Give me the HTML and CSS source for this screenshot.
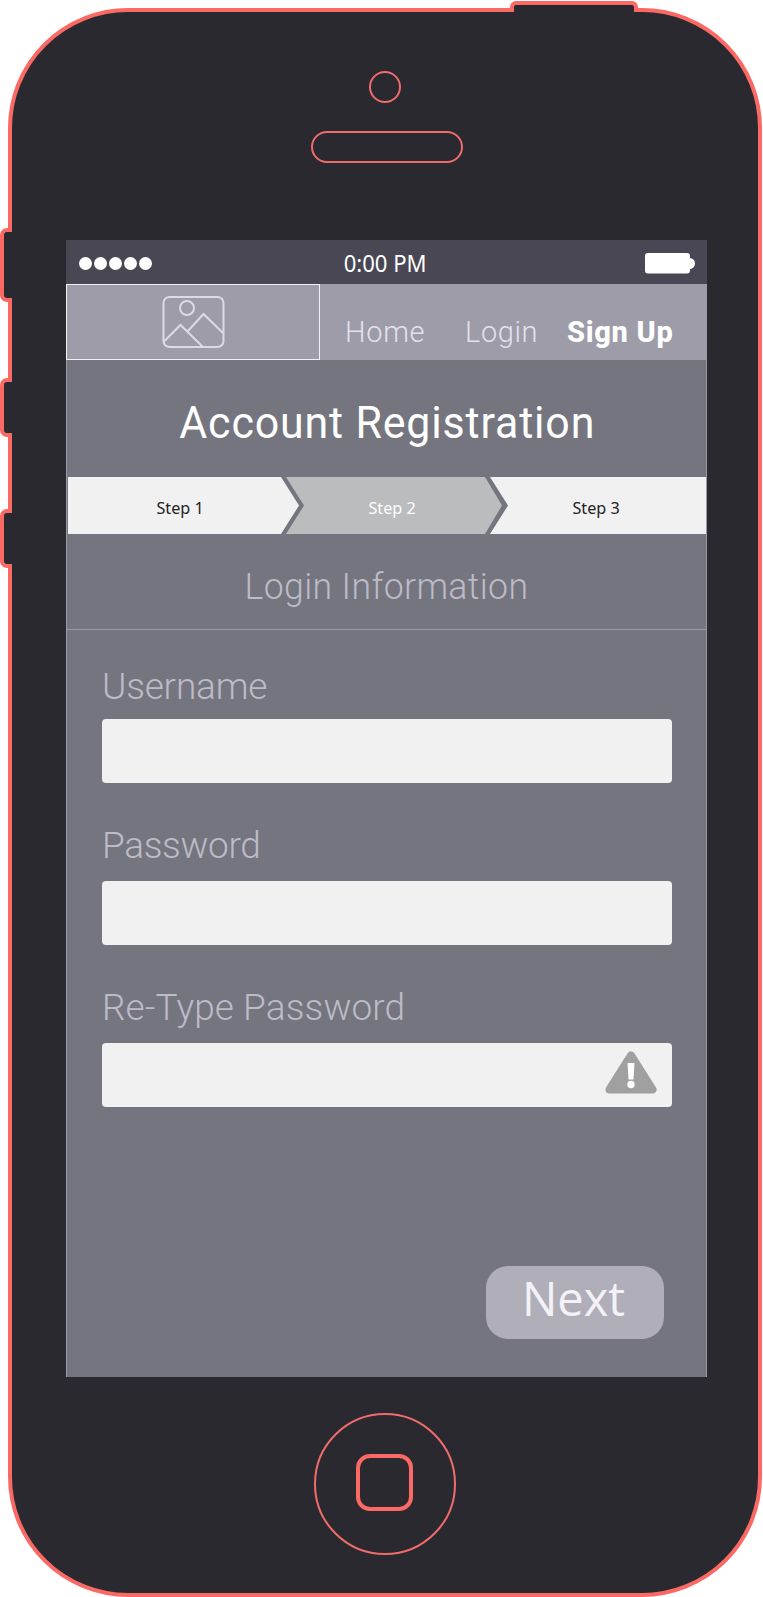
FILE: index.html
```html
<!DOCTYPE html>
<html lang="en">
<head>
<meta charset="utf-8">
<title>Account Registration</title>
<link rel="stylesheet" href="styles.css">
</head>
<body>
<div class="phone">
  <span class="key key-power"></span>
  <span class="key key-mute"></span>
  <span class="key key-up"></span>
  <span class="key key-down"></span>
  <div class="camera"></div>
  <div class="speaker"></div>
  <main class="screen">
    <div class="status">
      <div class="signal"><i></i><i></i><i></i><i></i><i></i></div>
      <span class="clock">0:00 PM</span>
      <svg class="battery" width="51" height="21" viewBox="0 0 51 21"><rect x="1" width="45" height="20.500" rx="3"/><circle cx="45.500" cy="10.500" r="5.500"/></svg>
    </div>
    <nav class="nav">
      <div class="logo">
        <svg width="64" height="54" viewBox="0 0 64 54"><rect x="2.500" y="2" width="60" height="50" rx="6"/><circle cx="26" cy="13" r="7"/><path d="M3 46.500L19.500 30L41.500 51.500M26.500 36.500L42.500 19L62 38"/></svg>
      </div>
      <div class="links">
        <a class="link home">Home</a>
        <a class="link login">Login</a>
        <a class="link signup">Sign Up</a>
      </div>
    </nav>
    <h1 class="title"><span>Account Registration</span></h1>
    <ol class="steps">
      <li class="step first"><span>Step 1</span></li>
      <li class="step current"><span>Step 2</span></li>
      <li class="step last"><span>Step 3</span></li>
    </ol>
    <h2 class="subtitle"><span>Login Information</span></h2>
    <form class="form">
      <div class="field"><label class="l-user">Username</label><div class="input"></div></div>
      <div class="field"><label class="l-pass">Password</label><div class="input"></div></div>
      <div class="field"><label class="l-retype">Re-Type Password</label><div class="input">
        <svg class="warn" width="52" height="43" viewBox="0 0 52 43"><path class="tri" d="M26 4.500L47.500 38.500H4.500Z"/><path class="mark" d="M22.500 12H29.500L28.500 28.500H23.500Z"/><circle class="mark" cx="26" cy="33.500" r="3.700"/></svg>
      </div></div>
      <div class="next"><span>Next</span></div>
    </form>
  </main>
  <div class="home-button"><div class="home-square"></div></div>
</div>
</body>
</html>
```
FILE: styles.css
```css
* { box-sizing: border-box; }
body { margin: 0; background: #fff; font-family: Roboto, sans-serif; padding: 8px 0 0 8px; }
.phone {
  position: relative; width: 754px; height: 1589px;
  border: 4px solid #fb6964; border-radius: 120px; background: #2a2930;
  display: flex; flex-direction: column; align-items: center;
}
.key { position: absolute; border: 4px solid #fb6964; background: #2a2930; }
.key-power { left: 498px; top: -11px; width: 128px; height: 11px; border-bottom: 0; border-radius: 6px 6px 0 0; }
.key-mute, .key-up, .key-down { left: -12px; width: 12px; border-right: 0; border-radius: 7px 0 0 7px; }
.key-mute { top: 216px; height: 74px; }
.key-up { top: 366px; height: 59px; }
.key-down { top: 497px; height: 59px; }
.camera { flex: none; margin-top: 59px; width: 32px; height: 32px; border: 2px solid #f06c6a; border-radius: 50%; }
.speaker { flex: none; margin: 28px 0 0 4px; width: 152px; height: 32px; border: 2px solid #f06c6a; border-radius: 16px; }
.screen {
  flex: none; margin: 77px 0 0 3px; width: 641px; height: 1137px; background: #75757f;
  display: flex; flex-direction: column; box-shadow: inset 1px 0 #9a99a5, inset -1px 0 #9a99a5;
}
.status {
  height: 44px; flex: none; background: #484753; display: grid;
  grid-template-columns: 1fr auto 1fr; align-items: center; padding: 3px 12px 0 13px;
}
.signal { display: flex; gap: 2.100px; }
.signal i { width: 13px; height: 13px; border-radius: 50%; background: #fff; }
.clock { font: 23.500px/40px "Noto Sans", sans-serif; color: #fff; transform: scaleX(.94); margin: -2px 4px 0 0; }
.battery { justify-self: end; fill: #fff; }
.nav { height: 76px; flex: none; background: #9d9ca8; display: flex; }
.logo { width: 254px; border: 1px solid #f0f0f5; padding: 10px 0 0 94px; flex: none; }
.logo svg { display: block; fill: none; stroke: #dcdbe5; stroke-width: 2; }
.links { display: flex; padding-top: 31px; font-size: 29px; line-height: 34px; font-weight: 300; color: #e3e2ec; }
.link { white-space: nowrap; letter-spacing: .6px; }
.home { margin-left: 25px; width: 120px; letter-spacing: .7px; }
.login { width: 102px; }
.signup { font-weight: 800; color: #fff; letter-spacing: .7px; }
.title { flex: none; margin: 0; height: 117px; padding: 8px 0 0 2px; font-size: 45px; font-weight: 400; line-height: 109px; letter-spacing: .9px; color: #fff; text-align: center; }
.title span { display: inline-block; transform: scaleX(.953); }
.steps { flex: none; list-style: none; margin: 0 1px 0 2px; padding: 0; height: 57px; display: flex; font: 16.500px/57px "Noto Sans", sans-serif; color: #222; }
.step { background: #f1f1f2; text-align: center; padding-top: 2px; }
.step span { display: inline-block; transform: scaleX(.98); }
.first { width: 231px; padding-right: 7px; clip-path: polygon(0 0, 213px 0, 231px 28.500px, 213px 57px, 0 57px); }
.current { width: 221px; margin-left: -14px; padding-right: 7px; background: #bbbcbe; color: #fff; clip-path: polygon(1px 0, 200px 0, 217px 28.500px, 200px 57px, 1px 57px, 19px 28.500px); }
.last { flex: 1; margin-left: -17px; padding-right: 3px; clip-path: polygon(1px 0, 100% 0, 100% 57px, 1px 57px, 19px 28.500px); }
.subtitle { flex: none; margin: 0; height: 96px; padding-top: 10px; border-bottom: 1px solid #9a99a5; font-size: 37px; font-weight: 300; line-height: 85px; letter-spacing: .4px; color: #bcbbc7; text-align: center; }
.subtitle span { display: inline-block; transform: scaleX(.963); }
.form { display: flex; flex-direction: column; padding: 34px 35px 0 36px; }
.field { display: flex; flex-direction: column; height: 162px; }
.field label { position: relative; font-size: 37px; font-weight: 300; line-height: 44px; color: #bcbbc7; }
.l-user { top: 1px; letter-spacing: -.2px; }
.l-pass { letter-spacing: -.35px; }
.l-retype { letter-spacing: .1px; }
.field:nth-child(2) label, .field:nth-child(3) label { margin-top: -2px; margin-bottom: 2px; }
.input { margin-top: 11px; height: 64px; border-radius: 4px; background: #f1f1f2; display: flex; justify-content: flex-end; padding: 8px 15px 0 0; }
.tri { fill: #a0a0a0; stroke: #a0a0a0; stroke-width: 8; stroke-linejoin: round; }
.mark { fill: #fff; }
.next { align-self: flex-end; margin: 116px 8px 0 0; width: 178px; height: 73px; padding-right: 3px; border-radius: 22px; background: #b0afb9; font: 400 47px/65px "Open Sans", sans-serif; color: #f3f2f7; text-align: center; }
.home-button { flex: none; margin-top: 36px; width: 142px; height: 142px; border: 2px solid #f06c6a; border-radius: 50%; padding: 39px 0 0 40px; }
.home-square { width: 57px; height: 57px; border: 4px solid #fb6964; border-radius: 14px; }
```
